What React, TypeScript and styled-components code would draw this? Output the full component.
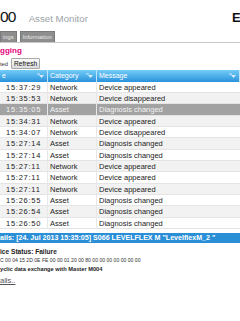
import styled, { createGlobalStyle } from 'styled-components';

const GlobalStyle = createGlobalStyle`
  html, body {
    margin: 0;
    padding: 0;
    background: #fff;
    overflow: hidden;
  }
  body {
    font-family: "Liberation Sans", Arial, sans-serif;
    color: #222;
  }
`;

const Page = styled.div`
  width: 240px;
  height: 321px;
  overflow: hidden;
  display: flex;
  flex-direction: column;
`;

const TopBar = styled.header`
  height: 29px;
  display: flex;
  align-items: flex-start;
  padding-top: 8px;
  box-sizing: border-box;
`;

const Product = styled.div`
  font-size: 15.5px;
  line-height: 18px;
  letter-spacing: -0.8px;
  color: #111;
`;

const AppName = styled.div`
  font-size: 9.7px;
  line-height: 10px;
  color: #9aa3a8;
  margin: 6px 0 0 13px;
`;

const Logo = styled.div`
  margin-left: auto;
  margin-top: 3px;
  font-size: 13px;
  line-height: 13px;
  font-weight: bold;
  color: #111;
  width: 8px;
  overflow: hidden;
`;

const Tabs = styled.nav`
  display: flex;
  gap: 3px;
  margin-top: 2px;
  height: 11px;
  border-bottom: 1px solid #c8c8c8;
`;

const Tab = styled.div`
  background: #8e8e8e;
  color: #eaeaea;
  font-size: 5.8px;
  line-height: 10px;
  padding: 0 2px;
  border: 1px solid #7a7a7a;
  border-bottom: none;
  box-sizing: border-box;
`;

const Heading = styled.h1`
  margin: 0;
  height: 14px;
  font-size: 8px;
  line-height: 15px;
  font-weight: bold;
  color: #e2007a;
`;

const StatusRow = styled.div`
  height: 13px;
  display: flex;
  align-items: center;
  gap: 3px;
  font-size: 5.8px;
  color: #333;
`;

const Button = styled.button`
  height: 11px;
  padding: 0 2px;
  font-family: inherit;
  font-size: 6.6px;
  line-height: 9px;
  color: #111;
  background: linear-gradient(#fafafa, #dcdcdc);
  border: 1px solid #a9a9a9;
  border-radius: 1px;
`;

const Grid = styled.div`
  display: grid;
  grid-template-columns: 48px 49px 1fr;
`;

const HeadCell = styled.div`
  height: 11.5px;
  display: flex;
  align-items: center;
  justify-content: space-between;
  padding: 0 3px 0 2px;
  background: linear-gradient(#74ccf7, #2a93dc);
  color: #fff;
  font-size: 7px;
  border-right: 1px solid #bfe3f8;
  &:last-child { border-right: none; }
`;

const Cell = styled.div<{ $stripe: boolean; $selected: boolean }>`
  height: 11.35px;
  line-height: 11.35px;
  font-size: 7.5px;
  padding-left: 2px;
  white-space: nowrap;
  overflow: hidden;
  box-sizing: border-box;
  border-bottom: 1px solid #e4e4e4;
  border-right: 1px solid #e8e8e8;
  background: ${p => (p.$selected ? '#a2a2a2' : p.$stripe ? '#f2f2f2' : '#fff')};
  color: ${p => (p.$selected ? '#f4f4f4' : '#222')};
  &:nth-child(3n) { border-right: none; }
`;

const TimeCell = styled(Cell)`
  padding-left: 6px;
  letter-spacing: 0.75px;
`;

const DetailsBar = styled.div`
  margin-top: 4px;
  height: 10px;
  line-height: 10px;
  background: #2b8fd8;
  color: #fff;
  font-size: 7.1px;
  font-weight: bold;
  white-space: nowrap;
`;

const Details = styled.div`
  padding-top: 4px;
  display: flex;
  flex-direction: column;
`;

const Strong = styled.div<{ $size: number }>`
  font-size: ${p => p.$size}px;
  line-height: 10px;
  font-weight: bold;
  color: #222;
`;

const Hex = styled.div`
  font-size: 5.1px;
  line-height: 6px;
  color: #333;
  margin-bottom: 1px;
`;

const More = styled.a`
  margin-top: 2px;
  font-size: 7.5px;
  line-height: 9px;
  color: #555;
  text-decoration: underline;
`;

const SortIcon = () => (
  <svg width="7" height="6" viewBox="0 0 7 6">
    <path d="M0 1H3" stroke="#d6eefc" strokeWidth="1" />
    <path d="M2 2H7L4.5 5Z" fill="#d6eefc" />
  </svg>
);

const rows = [
  ['15:37:29', 'Network', 'Device appeared'],
  ['15:35:53', 'Network', 'Device disappeared'],
  ['15:35:05', 'Asset', 'Diagnosis changed'],
  ['15:34:31', 'Network', 'Device appeared'],
  ['15:34:07', 'Network', 'Device disappeared'],
  ['15:27:14', 'Asset', 'Diagnosis changed'],
  ['15:27:14', 'Asset', 'Diagnosis changed'],
  ['15:27:11', 'Network', 'Device appeared'],
  ['15:27:11', 'Network', 'Device appeared'],
  ['15:27:11', 'Network', 'Device appeared'],
  ['15:26:55', 'Asset', 'Diagnosis changed'],
  ['15:26:54', 'Asset', 'Diagnosis changed'],
  ['15:26:50', 'Asset', 'Diagnosis changed'],
];

export default function App() {
  return (
    <Page>
      <GlobalStyle />
      <TopBar>
        <Product>00</Product>
        <AppName>Asset Monitor</AppName>
        <Logo>E</Logo>
      </TopBar>
      <Tabs>
        <Tab>ings</Tab>
        <Tab>Information</Tab>
      </Tabs>
      <Heading>gging</Heading>
      <StatusRow>
        <span>ted</span>
        <Button>Refresh</Button>
      </StatusRow>
      <Grid>
        <HeadCell>e<SortIcon /></HeadCell>
        <HeadCell>Category<SortIcon /></HeadCell>
        <HeadCell>Message<SortIcon /></HeadCell>
        {rows.map(([time, cat, msg], i) => {
          const selected = i === 2;
          const stripe = i % 2 === 1;
          return [
            <TimeCell key={`t${i}`} $stripe={stripe} $selected={selected}>{time}</TimeCell>,
            <Cell key={`c${i}`} $stripe={stripe} $selected={selected}>{cat}</Cell>,
            <Cell key={`m${i}`} $stripe={stripe} $selected={selected}>{msg}</Cell>,
          ];
        })}
      </Grid>
      <DetailsBar>ails: [24. Jul 2013 15:35:05] S066 LEVELFLEX M "LevelflexM_2 "</DetailsBar>
      <Details>
        <Strong $size={6.6}>ice Status: Failure</Strong>
        <Hex>C 00 04 15 2D 0E FE 00 00 01 20 00 80 00 00 00 00 00 00 00</Hex>
        <Strong $size={5.7}>yclic data exchange with Master M004</Strong>
        <More href="#">ails..</More>
      </Details>
    </Page>
  );
}
